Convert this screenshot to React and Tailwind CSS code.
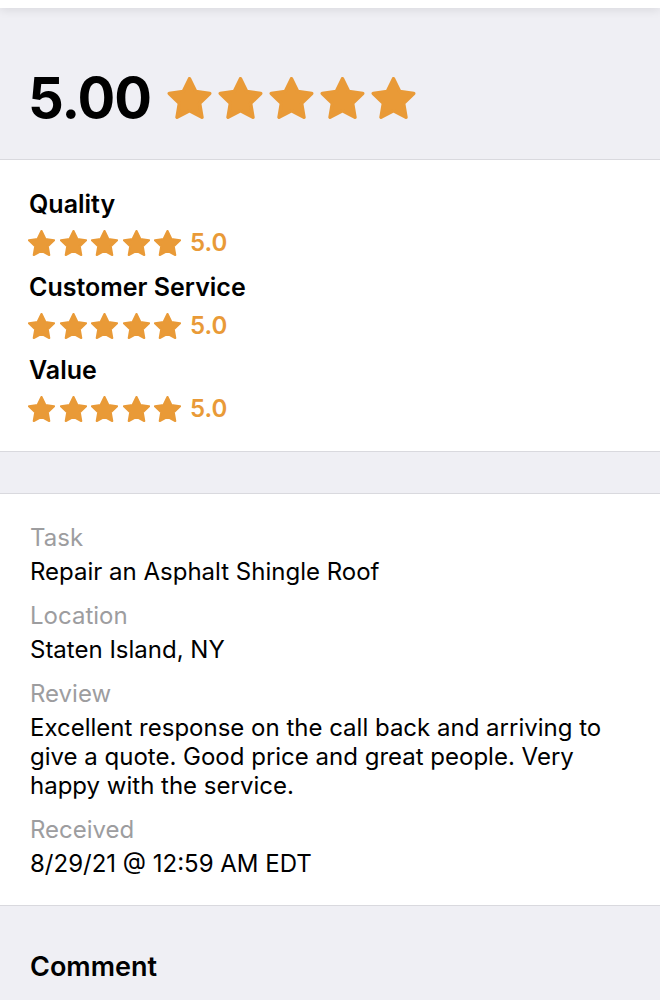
const STAR_PATH =
  'M12 2.6l2.9 5.9 6.5.95-4.7 4.6 1.1 6.45L12 17.45 6.2 20.5l1.1-6.45-4.7-4.6 6.5-.95z';

function Star({ className }) {
  return (
    <svg viewBox="1.9 1.8 20.2 19.5" className={className}>
      <path
        d={STAR_PATH}
        fill="#e99a37"
        stroke="#e99a37"
        strokeWidth="1.6"
        strokeLinejoin="round"
      />
    </svg>
  );
}

function Stars({ count = 5, size, gap }) {
  return (
    <div className={`flex ${gap}`}>
      {Array.from({ length: count }).map((_, i) => (
        <Star key={i} className={size} />
      ))}
    </div>
  );
}

const categories = ['Quality', 'Customer Service', 'Value'];

const details = [
  { label: 'Task', value: 'Repair an Asphalt Shingle Roof' },
  { label: 'Location', value: 'Staten Island, NY' },
  {
    label: 'Review',
    value:
      'Excellent response on the call back and arriving to give a quote. Good price and great people. Very happy with the service.',
  },
  { label: 'Received', value: '8/29/21 @ 12:59 AM EDT' },
];

export default function App() {
  return (
    <div className="w-[660px] h-[1000px] overflow-hidden bg-[#efeff4] font-['Inter',sans-serif] text-black">
      {/* nav bar edge */}
      <div className="relative z-10 h-[8px] bg-white shadow-[0_2px_10px_rgba(0,0,0,0.10)]" />

      {/* overall rating */}
      <div className="flex items-center gap-[16px] pl-[28px] pr-[30px] pt-[60px] pb-[31px] border-b border-[#d9d9de]">
        <span className="text-[56px] leading-[60px] font-bold tracking-[-1px]">5.00</span>
        <Stars size="w-[45px] h-[42px]" gap="gap-[6px]" />
      </div>

      {/* category ratings */}
      <div className="bg-white px-[28px] pt-[29px] pb-[29px] flex flex-col gap-[16px] border-b border-[#d9d9de]">
        {categories.map((c) => (
          <div key={c} className="flex flex-col gap-[11px]">
            <div className="text-[25px] leading-[30px] font-semibold pl-[1px]">{c}</div>
            <div className="flex items-center gap-[9px] h-[26px]">
              <Stars size="w-[27px] h-[26px]" gap="gap-[4.5px]" />
              <span className="text-[24px] leading-[26px] font-semibold text-[#e99a37]">5.0</span>
            </div>
          </div>
        ))}
      </div>

      <div className="h-[41px]" />

      {/* review details */}
      <div className="bg-white border-t border-b border-[#d9d9de] px-[30px] pt-[29px] pb-[27px] flex flex-col gap-[15px]">
        {details.map((d) => (
          <div key={d.label} className="flex flex-col gap-[5px]">
            <div className="text-[24px] leading-[29px] text-[#9d9d9f]">{d.label}</div>
            <div className="text-[24px] leading-[29px]">{d.value}</div>
          </div>
        ))}
      </div>

      {/* comment header */}
      <div className="px-[30px] pt-[45px]">
        <div className="text-[27px] leading-[32px] font-semibold">Comment</div>
      </div>
    </div>
  );
}
